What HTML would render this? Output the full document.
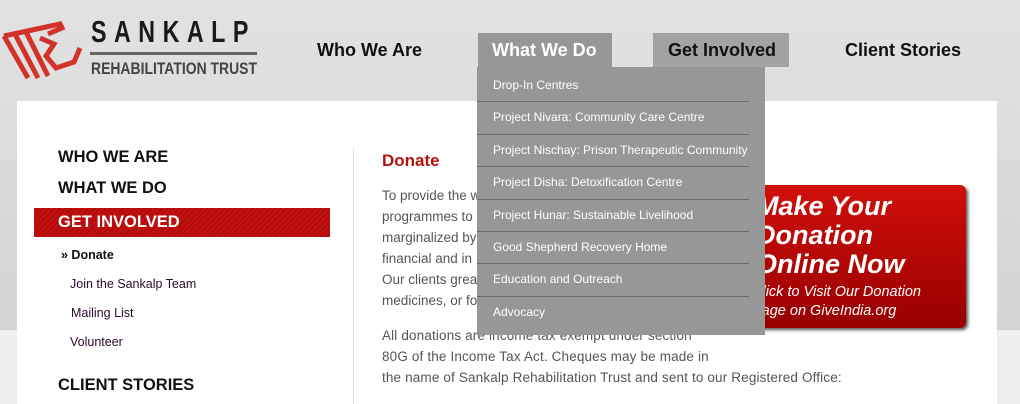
<!DOCTYPE html>
<html><head><style>
body{margin:0;width:1020px;height:404px;overflow:hidden;position:relative;font-family:"Liberation Sans",sans-serif;background:linear-gradient(#e2e2e2,#d4d4d4 330px,#efefef 330px);}
.a{position:absolute;}
.nav{font-weight:bold;font-size:18px;color:#111;top:40px;}
.dd div{height:31.4px;line-height:31px;border-bottom:1px solid #6a6a6a;font-size:12px;color:#fff;padding-left:16px;width:256px}
.left{font-weight:bold;font-size:16.5px;color:#111;}
.sub{font-size:12.5px;color:#2a0a2a;}
.p{font-size:13.5px;color:#555;line-height:21px;}
</style></head><body>
<svg class="a" style="left:0;top:18px" width="84" height="66" viewBox="0 0 84 66">
<g fill="none" stroke="#d3322b" stroke-width="5">
<path d="M4 18 L60 6 L62 10 L48 16"/>
<path d="M4 18 L28 60"/><path d="M15 16 L38 60"/><path d="M26 14 L48 58"/>
<path d="M40 20 L54 26 L46 38 L56 50 L74 44 L80 30"/>
</g></svg>
<div class="a" style="left:91px;top:14px;font-weight:bold;font-size:31px;letter-spacing:10px;color:#1a1a1a;transform:scaleX(.75);transform-origin:left">SANKALP</div>
<div class="a" style="left:90px;top:52px;width:167px;height:3px;background:#666"></div>
<div class="a" style="left:91px;top:59px;font-weight:bold;font-size:17px;color:#444;transform:scaleX(.82);transform-origin:left">REHABILITATION TRUST</div>
<div class="a nav" style="left:317px">Who We Are</div>
<div class="a" style="left:478px;top:33px;width:134px;height:34px;background:#979797"></div>
<div class="a nav" style="left:492px;color:#fff">What We Do</div>
<div class="a" style="left:653px;top:33px;width:136px;height:34px;background:#a3a3a3"></div>
<div class="a nav" style="left:668px">Get Involved</div>
<div class="a nav" style="left:845px">Client Stories</div>
<div class="a" style="left:17px;top:101px;width:980px;height:303px;background:#fff"></div>
<div class="a left" style="left:58px;top:148px">WHO WE ARE</div>
<div class="a left" style="left:58px;top:179px">WHAT WE DO</div>
<div class="a" style="left:34px;top:208px;width:296px;height:29px;background:repeating-linear-gradient(135deg,#c41010 0 2px,#b00c0c 2px 4px)"></div>
<div class="a left" style="left:58px;top:213px;color:#fff">GET INVOLVED</div>
<div class="a" style="left:61px;top:248px;font-size:12.5px;font-weight:bold;color:#111">» Donate</div>
<div class="a sub" style="left:70px;top:277px">Join the Sankalp Team</div>
<div class="a sub" style="left:71px;top:306px">Mailing List</div>
<div class="a sub" style="left:70px;top:335px">Volunteer</div>
<div class="a left" style="left:58px;top:376px">CLIENT STORIES</div>
<div class="a" style="left:353px;top:148px;width:1px;height:256px;background:#ddd"></div>
<div class="a" style="left:382px;top:151px;font-size:17px;font-weight:bold;color:#b5120f">Donate</div>
<div class="a p" style="left:382px;top:185px">To provide the w<br>programmes to<br>marginalized by<br>financial and in<br>Our clients grea<br>medicines, or fo</div>
<div class="a p" style="left:382px;top:325px;letter-spacing:.15px">All donations are income tax exempt under section<br>80G of the Income Tax Act. Cheques may be made in<br>the name of Sankalp Rehabilitation Trust and sent to our Registered Office:</div>
<div class="a" style="left:720px;top:185px;width:246px;height:143px;border-radius:6px;background:linear-gradient(#d10f0b,#980000);box-shadow:2px 2px 3px #555"></div>
<div class="a" style="left:756px;top:192px;font-size:27px;font-weight:bold;font-style:italic;color:#fff;line-height:29px">Make Your<br>Donation<br>Online Now</div>
<div class="a" style="left:752px;top:283px;font-size:14.5px;font-style:italic;color:#fff;line-height:19px">Click to Visit Our Donation<br>Page on GiveIndia.org</div>
<div class="a dd" style="left:477px;top:67px;width:288px;height:265px;background:#979797;padding-top:3px">
<div>Drop-In Centres</div>
<div>Project Nivara: Community Care Centre</div>
<div>Project Nischay: Prison Therapeutic Community</div>
<div>Project Disha: Detoxification Centre</div>
<div>Project Hunar: Sustainable Livelihood</div>
<div>Good Shepherd Recovery Home</div>
<div>Education and Outreach</div>
<div style="border:0">Advocacy</div>
</div>
</body></html>
